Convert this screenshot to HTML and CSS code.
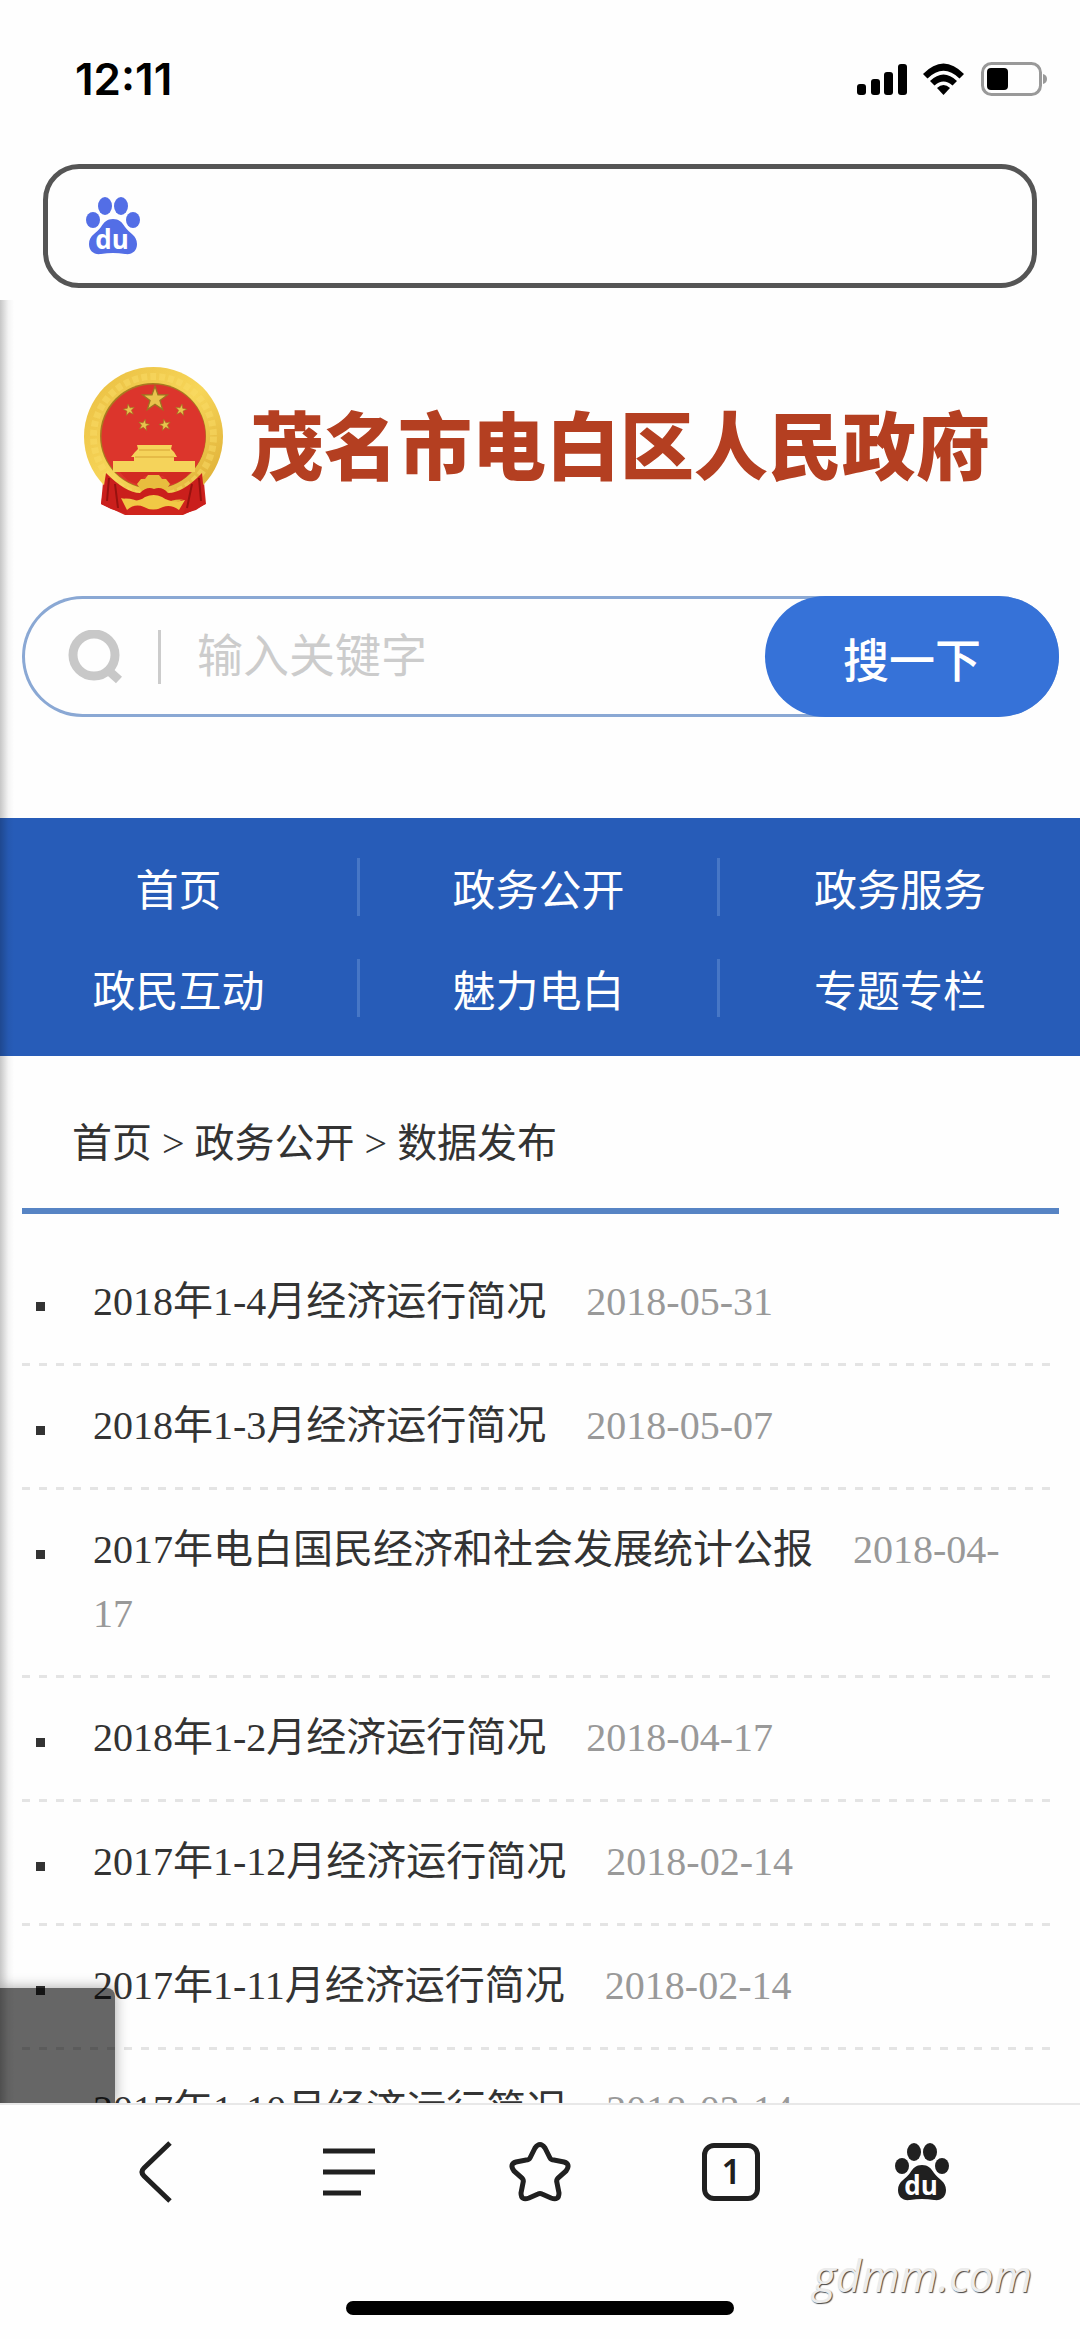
FILE: index.html
```html
<!DOCTYPE html>
<html lang="zh-CN">
  <head>
    <meta charset="UTF-8">
    <meta name="viewport" content="width=device-width, initial-scale=1.0">
    <title>茂名市电白区人民政府</title>
    <link rel="stylesheet" href="styles.css">
  </head>
  <body>
    <div class="status-bar">
      <span class="clock">12:11</span>
      <div class="status-icons">
        <svg width="50" height="32" viewBox="0 0 50 32" aria-hidden="true">
          <rect x="0" y="21" width="9" height="11" rx="3"/>
          <rect x="14" y="16" width="9" height="16" rx="3"/>
          <rect x="27" y="9" width="9" height="23" rx="3"/>
          <rect x="41" y="1" width="9" height="31" rx="3"/>
        </svg>
        <svg width="43" height="32" viewBox="0 0 43 32" aria-hidden="true">
          <path d="M1 11 Q21.500 -10 42 11 L37.500 15.500 Q21.500 0 5.500 15.500 Z"/>
          <path d="M8 18 Q21.500 5 35 18 L30.500 22.500 Q21.500 14.500 12.500 22.500 Z"/>
          <path d="M15 25 Q21.500 19 28 25 L21.500 32 Z"/>
        </svg>
        <svg width="68" height="34" viewBox="0 0 68 34" aria-hidden="true">
          <rect class="battery-case" x="2.500" y="1.500" width="58" height="31" rx="9"/>
          <rect x="7" y="6" width="21" height="22" rx="4"/>
          <path class="battery-tip" d="M63 12 Q67 13 67 17 Q67 21 63 22 Z"/>
        </svg>
      </div>
    </div>

    <div class="address-bar">
      <svg class="paw paw-blue" width="54" height="58" viewBox="0 0 54 58" aria-hidden="true">
        <ellipse cx="7" cy="23" rx="7" ry="8"/>
        <ellipse cx="19" cy="9" rx="7" ry="9"/>
        <ellipse cx="35" cy="9" rx="7" ry="9"/>
        <ellipse cx="47" cy="23" rx="7" ry="8"/>
        <path d="M27 22 C33 22 36 25 39 30 C43 36 51 38 51 47 C51 54 46 58 39 57 Q27 55 15 57 C8 58 3 54 3 47 C3 38 11 36 15 30 C18 25 21 22 27 22 Z"/>
        <text x="26" y="52" text-anchor="middle">du</text>
      </svg>
      <input class="address-input" type="text" aria-label="网址">
    </div>

    <main class="site">
      <header class="site-header">
        <svg class="emblem" width="140" height="149" viewBox="0 0 140 149" aria-hidden="true">
          <defs>
            <linearGradient id="gold" x1="0" y1="0" x2="1" y2="1">
              <stop offset="0" stop-color="#e9bd40"/>
              <stop offset="0.500" stop-color="#f7d659"/>
              <stop offset="1" stop-color="#d9a62f"/>
            </linearGradient>
            <path id="star" d="M0 -10 L2.300 -3.200 L9.500 -3.100 L3.800 1.200 L5.900 8.100 L0 4 L-5.900 8.100 L-3.800 1.200 L-9.500 -3.100 L-2.300 -3.200 Z"/>
          </defs>
          <path d="M20 105 L17 137 L28 142 L41 148 L99 148 L112 142 L122 137 L119 105 Z" fill="#cf241d"/>
          <circle cx="69.500" cy="69.500" r="69.500" fill="url(#gold)"/>
          <circle cx="69.500" cy="69.500" r="60" fill="none" stroke="#f9dc66" stroke-width="7" stroke-dasharray="6 3" opacity="0.500"/>
          <circle cx="69" cy="69" r="53" fill="#a87b20"/>
          <circle cx="69.500" cy="69.500" r="52" fill="#dc352c"/>
          <g fill="#e9c24d" stroke="#9c7420" stroke-width="1">
            <use href="#star" transform="translate(71 32) scale(1.300)"/>
            <use href="#star" transform="translate(45 43) rotate(-10) scale(0.600)"/>
            <use href="#star" transform="translate(60 58) rotate(12) scale(0.600)"/>
            <use href="#star" transform="translate(81 58) rotate(-12) scale(0.600)"/>
            <use href="#star" transform="translate(97 43) rotate(10) scale(0.600)"/>
          </g>
          <path d="M53 78 H88 L87 82 L90 85 L93 90 H90 V94 H111 V105 H29 V94 H50 V90 H47 L51 85 L54 82 Z" fill="#f5d35a"/>
          <path d="M55 83 H86 M51 90 H90" stroke="#d6a334" stroke-width="1"/>
          <path d="M36 105 H106 Q99 115 87 117 L79 109 H61 L53 117 Q42 114 36 105 Z" fill="#d22b22"/>
          <path d="M53 117 L57 112 L61 112 L64 108 H75 L78 112 L82 112 L86 117 L80 126 H59 Z" fill="#e8bd3e"/>
          <path d="M22 106 Q42 126 56 126 Q63 119 70 122 Q78 119 84 126 Q99 126 118 106 L121 137 L112 143 L99 147 L105 134 Q92 130 81 137 Q70 143 58 137 Q48 130 37 132 L44 147 L27 142 L17 137 Z" fill="#ca1f1c"/>
          <path d="M37 131 Q52 137 61 130 Q70 126 78 130 Q88 137 101 133 L95 143 Q87 137 79 140 Q69 145 60 140 Q51 136 43 143 Z" fill="#f1c845"/>
          <path d="M25 111 L23 134 M31 117 L34 141 M108 117 L103 141 M115 111 L117 134" stroke="#97120f" stroke-width="2"/>
        </svg>
        <h1>茂名市电白区人民政府</h1>
      </header>

      <form class="search">
        <label class="search-icon" for="keyword" aria-label="输入关键字">
          <svg width="56" height="54" viewBox="0 0 56 54" aria-hidden="true">
            <circle cx="26" cy="25" r="21"/>
            <path d="M41 41 L51 50"/>
          </svg>
        </label>
        <input id="keyword" class="search-input" type="text" placeholder="输入关键字">
        <button class="search-button" type="submit">搜一下</button>
      </form>

      <nav class="main-nav">
        <a href="#">首页</a>
        <a href="#">政务公开</a>
        <a href="#">政务服务</a>
        <a href="#">政民互动</a>
        <a href="#">魅力电白</a>
        <a href="#">专题专栏</a>
      </nav>

      <div class="content">
        <div class="breadcrumb"><a href="#">首页</a> &gt; <a href="#">政务公开</a> &gt; <a href="#">数据发布</a></div>
        <ul class="news-list">
          <li><a href="#">2018年1-4月经济运行简况</a><span class="date">2018-05-31</span></li>
          <li><a href="#">2018年1-3月经济运行简况</a><span class="date">2018-05-07</span></li>
          <li><a href="#">2017年电白国民经济和社会发展统计公报</a><span class="date">2018-04-17</span></li>
          <li><a href="#">2018年1-2月经济运行简况</a><span class="date">2018-04-17</span></li>
          <li><a href="#">2017年1-12月经济运行简况</a><span class="date">2018-02-14</span></li>
          <li><a href="#">2017年1-11月经济运行简况</a><span class="date">2018-02-14</span></li>
          <li><a href="#">2017年1-10月经济运行简况</a><span class="date">2018-02-14</span></li>
        </ul>
      </div>
      <div class="edge-shadow"></div>
      <div class="float-box"></div>
    </main>

    <footer class="toolbar">
      <div class="tools">
        <button type="button" aria-label="后退">
          <svg class="line-icon" width="60" height="62" viewBox="0 0 60 62" aria-hidden="true">
            <path d="M42 2 L16 27 Q12 31 16 35 L42 60"/>
          </svg>
        </button>
        <button type="button" aria-label="菜单">
          <svg class="line-icon" width="60" height="62" viewBox="0 0 60 62" aria-hidden="true">
            <path d="M4 10 H56 M4 31 H56 M4 52 H42"/>
          </svg>
        </button>
        <button type="button" aria-label="收藏">
          <svg class="line-icon" width="64" height="62" viewBox="0 0 64 62" aria-hidden="true">
            <path d="M27 7 Q32 0 37 7 L42 17 Q43 19 46 19 L56 21 Q63 23 58 30 L50 37 Q48 39 49 42 L51 52 Q51 60 43 57 L34 53 Q32 52 30 53 L21 57 Q13 60 13 52 L15 42 Q16 39 14 37 L6 30 Q1 23 8 21 L18 19 Q21 19 22 17 Z"/>
          </svg>
        </button>
        <button type="button" aria-label="窗口"><span class="tab-count">1</span></button>
        <button type="button" aria-label="百度首页">
          <svg class="paw" width="54" height="58" viewBox="0 0 54 58" aria-hidden="true">
            <ellipse cx="7" cy="23" rx="7" ry="8"/>
            <ellipse cx="19" cy="9" rx="7" ry="9"/>
            <ellipse cx="35" cy="9" rx="7" ry="9"/>
            <ellipse cx="47" cy="23" rx="7" ry="8"/>
            <path d="M27 22 C33 22 36 25 39 30 C43 36 51 38 51 47 C51 54 46 58 39 57 Q27 55 15 57 C8 58 3 54 3 47 C3 38 11 36 15 30 C18 25 21 22 27 22 Z"/>
            <text x="26" y="52" text-anchor="middle">du</text>
          </svg>
        </button>
      </div>
      <div class="home-indicator"></div>
      <span class="watermark">gdmm.com</span>
    </footer>
  </body>
</html>
```
FILE: styles.css
```css
:root {
  --primary-color: #275cb8;
  --button-color: #3672d8;
  --title-color: #b43f21;
  --text-color: #333;
  --icon-color: #202020;
}

* {
  box-sizing: border-box;
}

body {
  display: flex;
  flex-direction: column;
  height: 100vh;
  margin: 0;
  overflow: hidden;
  background-color: #fefefe;
  color: var(--text-color);
  font-family: 'Liberation Serif', 'Noto Sans CJK SC', sans-serif;
}

a {
  color: inherit;
  text-decoration: none;
}

button {
  padding: 0;
  border: none;
  background: none;
  cursor: pointer;
}

input {
  border: none;
  outline: none;
  background: none;
}

/* phone status bar */
.status-bar {
  display: flex;
  align-items: center;
  justify-content: space-between;
  height: 158px;
  padding: 0 32px 0 75px;
}

.clock {
  color: #000;
  font-family: Inter, sans-serif;
  font-size: 44px;
  font-weight: 600;
}

.status-icons {
  display: flex;
  align-items: center;
  gap: 15px;
}

.battery-case {
  fill: none;
  stroke: #999;
  stroke-width: 3;
}

.battery-tip {
  fill: #999;
}

.address-bar {
  display: flex;
  flex: none;
  align-items: center;
  height: 124px;
  margin: 6px 43px 12px;
  padding: 0 38px;
  border: 5px solid #555;
  border-radius: 36px;
}

.address-input {
  flex: 1;
  height: 60px;
  font-size: 36px;
}

.paw {
  fill: var(--icon-color);
}

.paw-blue {
  fill: #536ee6;
}

.paw text {
  fill: #fff;
  font-family: 'Open Sans', sans-serif;
  font-size: 26px;
  font-weight: 700;
}

/* page shown in the browser */
.site {
  position: relative;
  flex: 1;
  min-height: 0;
  overflow: hidden;
}

.site-header {
  display: flex;
  align-items: center;
  gap: 26px;
  padding: 67px 84px 80px;
}

h1 {
  margin: 0;
  color: var(--title-color);
  font-family: 'Noto Sans CJK SC', sans-serif;
  font-size: 74px;
  font-weight: 900;
  line-height: 149px;
  white-space: nowrap;
}

.search {
  display: flex;
  align-items: center;
  height: 121px;
  margin: 0 21px 101px 22px;
  border-radius: 61px;
  box-shadow: inset 0 0 0 3px #8aa8d4;
}

.search-icon {
  display: flex;
  margin-left: 46px;
  padding-right: 34px;
  border-right: 3px solid #ccc;
}

.search-icon svg {
  fill: none;
  stroke: #c8c8c8;
  stroke-width: 9;
}

.search-input {
  flex: 1;
  min-width: 0;
  height: 80px;
  padding: 0 36px;
  color: var(--text-color);
  font-family: 'Liberation Serif', 'Noto Sans CJK SC', sans-serif;
  font-size: 46px;
}

.search-input::placeholder {
  color: #ccc;
}

.search-button {
  width: 294px;
  height: 121px;
  border-radius: 61px;
  background-color: var(--button-color);
  color: #fff;
  font-family: 'Liberation Serif', 'Noto Sans CJK SC', sans-serif;
  font-size: 46px;
  font-weight: 500;
}

.main-nav {
  display: grid;
  grid-template-columns: repeat(3, 1fr);
  row-gap: 43px;
  padding: 40px 0 39px;
  background-color: var(--primary-color);
}

.main-nav a {
  border-right: 3px solid #4777c6;
  color: #fff;
  font-family: 'Noto Sans CJK SC', sans-serif;
  font-size: 43px;
  line-height: 58px;
  text-align: center;
}

.main-nav a:nth-child(3n) {
  border-right: none;
}

.content {
  padding: 0 21px 0 22px;
}

.breadcrumb {
  padding: 56px 50px 32px;
  border-bottom: 6px solid #5784c4;
  font-size: 40px;
  line-height: 64px;
}

.news-list {
  margin: 0;
  padding: 28px 0 0;
  list-style: none;
}

/* dashes are longer than a dashed border draws them */
.news-list li {
  position: relative;
  padding: 28px 36px 32px 71px;
  background: repeating-linear-gradient(90deg, #e4e4e4 0 8px, transparent 8px 17px) left bottom / 100% 3px no-repeat;
  font-size: 40px;
  line-height: 64px;
}

.news-list li::before {
  content: '';
  position: absolute;
  top: 60px;
  left: 14px;
  width: 9px;
  height: 9px;
  background-color: var(--text-color);
}

.date {
  margin-left: 40px;
  color: #999;
}

.edge-shadow {
  position: absolute;
  top: 0;
  bottom: 0;
  left: 0;
  width: 14px;
  background: linear-gradient(90deg, rgba(0, 0, 0, 0.22), rgba(0, 0, 0, 0.04) 60%, rgba(0, 0, 0, 0));
}

.float-box {
  position: absolute;
  bottom: 0;
  left: 0;
  width: 115px;
  height: 115px;
  border-top-right-radius: 8px;
  background-color: rgba(0, 0, 0, 0.6);
  box-shadow: 0 0 14px rgba(0, 0, 0, 0.35);
}

/* browser toolbar */
.toolbar {
  position: relative;
  height: 236px;
  border-top: 2px solid #e8e8e8;
}

.tools {
  display: flex;
  padding: 36px 62px 0;
}

.tools button {
  display: flex;
  flex: 1;
  align-items: center;
  justify-content: center;
  height: 62px;
}

.line-icon {
  fill: none;
  stroke: var(--icon-color);
  stroke-width: 5;
}

.tab-count {
  width: 58px;
  height: 58px;
  border: 5px solid var(--icon-color);
  border-radius: 12px;
  color: var(--icon-color);
  font-family: 'Noto Sans', sans-serif;
  font-size: 34px;
  font-weight: 600;
  line-height: 46px;
}

.home-indicator {
  width: 36%;
  height: 14px;
  margin: 98px auto 0;
  border-radius: 7px;
  background-color: #000;
}

.watermark {
  position: absolute;
  right: 48px;
  bottom: 36px;
  color: #ececec;
  font-family: 'Open Sans', sans-serif;
  font-size: 44px;
  font-style: italic;
  line-height: 56px;
  text-shadow: 1px 1px 1px #444;
}
```
